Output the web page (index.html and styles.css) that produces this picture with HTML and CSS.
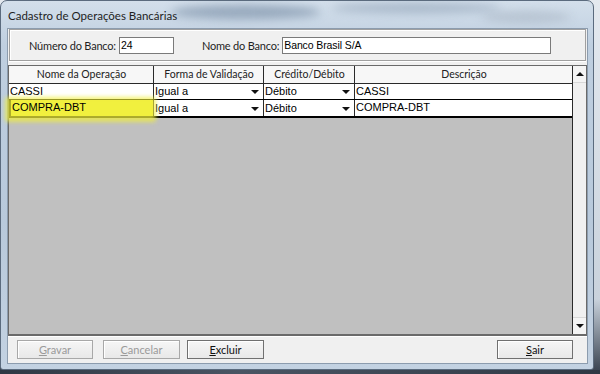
FILE: index.html
```html
<!DOCTYPE html>
<html>
<head>
<meta charset="utf-8">
<link rel="stylesheet" href="styles.css">
</head>
<body>
<div class="window">
  <div class="titlebar">
    <span class="smear s1"></span><span class="smear s2"></span><span class="smear s3"></span>
    <span class="title">Cadastro de Operações Bancárias</span>
  </div>
  <div class="client">
    <div class="bank-panel">
      <label class="lbl lbl-num">Número do Banco:</label>
      <div class="input input-num">24</div>
      <label class="lbl lbl-name">Nome do Banco:</label>
      <div class="input input-name">Banco Brasil S/A</div>
    </div>
    <div class="grid">
      <div class="grid-body">
        <div class="row header">
          <div class="cell c1">Nome da Operação</div>
          <div class="cell c2">Forma de Validação</div>
          <div class="cell c3">Crédito/Débito</div>
          <div class="cell c4">Descrição</div>
        </div>
        <div class="row data">
          <div class="cell c1">CASSI</div>
          <div class="cell c2 combo"><span>Igual a</span><span class="arrow"></span></div>
          <div class="cell c3 combo"><span>Débito</span><span class="arrow"></span></div>
          <div class="cell c4">CASSI</div>
        </div>
        <div class="row data current">
          <div class="cell c1 marked"><span class="glow"></span><span class="txt">COMPRA-DBT</span></div>
          <div class="cell c2 combo"><span>Igual a</span><span class="arrow"></span></div>
          <div class="cell c3 combo"><span>Débito</span><span class="arrow"></span></div>
          <div class="cell c4">COMPRA-DBT</div>
        </div>
      </div>
      <div class="scrollbar">
        <div class="sb-btn"><span class="tri up"></span></div>
        <div class="sb-track"></div>
        <div class="sb-btn"><span class="tri down"></span></div>
      </div>
    </div>
    <div class="buttons">
      <div class="btn b-gravar disabled"><u>G</u>ravar</div>
      <div class="btn b-cancelar disabled"><u>C</u>ancelar</div>
      <div class="btn b-excluir"><u>E</u>xcluir</div>
      <div class="spacer"></div>
      <div class="btn b-sair"><u>S</u>air</div>
    </div>
  </div>
  <div class="bottom-frame"></div>
</div>
<div class="desktop-strip"></div>
</body>
</html>
```

FILE: styles.css
```css
html, body {
  margin: 0;
  padding: 0;
}
body {
  width: 600px;
  height: 374px;
  overflow: hidden;
  background: linear-gradient(to bottom, #e4e9ef 0%, #c9d2dc 80%, #3b4552 99%);
  font-family: "Liberation Sans", Arial, sans-serif;
  position: relative;
}
.window {
  width: 594px;
  height: 370px;
  box-sizing: border-box;
  border: 1px solid #5b6b7e;
  border-radius: 7px 7px 3px 3px;
  background: linear-gradient(to bottom, #d3dfeb 0%, #bfcfe0 12%, #b8c9db 60%, #c3d2e2 100%);
  display: flex;
  flex-direction: column;
  overflow: hidden;
  position: relative;
}
.titlebar {
  height: 27px;
  position: relative;
  flex: none;
}
.title {
  position: relative;
  left: 7px;
  top: 5px;
  font-family: Lato, "Open Sans", sans-serif;
  font-size: 11.5px;
  color: #1e1e1e;
}
.smear {
  position: absolute;
  border-radius: 50%;
  filter: blur(5px);
}
.s1 { left: 170px; top: 4px; width: 150px; height: 14px; background: #7f93aa; opacity: 0.7; }
.s2 { left: 330px; top: 2px; width: 170px; height: 10px; background: #8b9db2; opacity: 0.6; }
.s3 { left: 480px; top: 10px; width: 90px; height: 12px; background: #aab6c4; opacity: 0.6; }
.client {
  flex: 1;
  margin: 0 5px 0 6px;
  background: #f0f0f0;
  border: 1px solid #8c9cae;
  display: flex;
  flex-direction: column;
}
.bank-panel {
  height: 29px;
  margin: 0 1px 0 1px;
  border: 1px solid #a0a0a0;
  box-shadow: inset 1px 1px 0 #fff, 0 1px 0 #fff;
  display: flex;
  align-items: center;
  font-family: Lato, "Open Sans", sans-serif;
  font-size: 11px;
  letter-spacing: -0.2px;
  color: #1e1e1e;
  padding-top: 1px;
}
.lbl-num { margin-left: 19px; margin-right: 3px; }
.lbl-name { margin-left: 28px; margin-right: 3px; }
.input {
  height: 15px;
  background: #fff;
  border: 1px solid #7a7a7a;
  font-family: "Liberation Sans", Arial, sans-serif;
  font-size: 10.5px;
  letter-spacing: -0.1px;
  line-height: 15px;
  padding-left: 1px;
  color: #000;
  box-sizing: content-box;
}
.input-num { width: 52px; }
.input-name { width: 266px; }
.grid {
  margin: 4px 0 0 0;
  height: 268px;
  border: 1px solid #6a6a6a;
  border-bottom: 2px solid #6a6a6a;
  display: flex;
  background: #c0c0c0;
}
.grid-body {
  flex: 1;
  display: flex;
  flex-direction: column;
}
.row {
  display: flex;
  font-size: 11px;
  color: #000;
}
.cell {
  box-sizing: border-box;
  border-right: 1px solid #2a2a2a;
  padding-left: 1px;
  white-space: nowrap;
  overflow: visible;
}
.c1 { width: 145px; }
.c2 { width: 110px; }
.c3 { width: 91px; }
.c4 { flex: 1; border-right: none; }
.header {
  height: 17px;
  background: #f7f7f7;
  border-bottom: 1px solid #2a2a2a;
}
.header .cell {
  text-align: center;
  line-height: 16px;
  color: #222;
  font-family: Lato, "Open Sans", sans-serif;
  font-size: 10.5px;
}
.data {
  height: 15px;
  background: #fff;
  border-bottom: 1px solid #2a2a2a;
}
.data .cell { line-height: 15px; }
.current {
  height: 16px;
  border-top: 1px solid #000;
  border-bottom: 2px solid #000;
  margin-top: -1px;
}
.current .cell { line-height: 15px; }
.combo {
  display: flex;
  justify-content: space-between;
  align-items: center;
  padding-right: 4px;
}
.arrow {
  width: 0;
  height: 0;
  border-left: 4px solid transparent;
  border-right: 4px solid transparent;
  border-top: 4px solid #111;
  margin-top: 1px;
}
.marked {
  position: relative;
  background: #f4f247;
  border-left: 2px solid #000;
}
.glow {
  position: absolute;
  left: -6px;
  top: -3px;
  width: 151px;
  height: 25px;
  background: rgba(240, 238, 60, 0.72);
  filter: blur(2px);
  border-radius: 3px;
}
.marked .txt { position: relative; }
.scrollbar {
  width: 13px;
  border-left: 1px solid #2a2a2a;
  display: flex;
  flex-direction: column;
  background: #f2f2f2;
}
.sb-btn {
  height: 16px;
  background: #f4f4f4;
  display: flex;
  align-items: center;
  justify-content: center;
  border-bottom: 1px solid #d8d8d8;
}
.sb-btn:last-child { border-top: 1px solid #d8d8d8; border-bottom: none; }
.sb-track { flex: 1; background: #f0f0f0; }
.tri {
  width: 0;
  height: 0;
  border-left: 4px solid transparent;
  border-right: 4px solid transparent;
}
.tri.up { border-bottom: 4px solid #111; }
.tri.down { border-top: 4px solid #111; }
.buttons {
  flex: 1;
  display: flex;
  align-items: center;
  padding: 0 14px 2px 9px;
  border-top: 1px solid #fff;
}
.btn {
  width: 74px;
  height: 17px;
  border: 1px solid #707070;
  background: linear-gradient(#f6f6f6, #e8e8e8);
  box-shadow: inset 1px 1px 0 #fff;
  text-align: center;
  line-height: 17px;
  font-family: Lato, "Open Sans", sans-serif;
  font-size: 11px;
  color: #111;
}
.b-cancelar { margin-left: 10px; width: 75px; }
.b-excluir { margin-left: 7px; width: 75px; }
.btn.disabled { color: #9a9a9a; border-color: #a8a8a8; }
.spacer { flex: 1; }
.bottom-frame {
  height: 5px;
  flex: none;
}
.desktop-strip {
  height: 4px;
  background: linear-gradient(to right, #2f3844, #4a5563 40%, #2f3844);
}
```
